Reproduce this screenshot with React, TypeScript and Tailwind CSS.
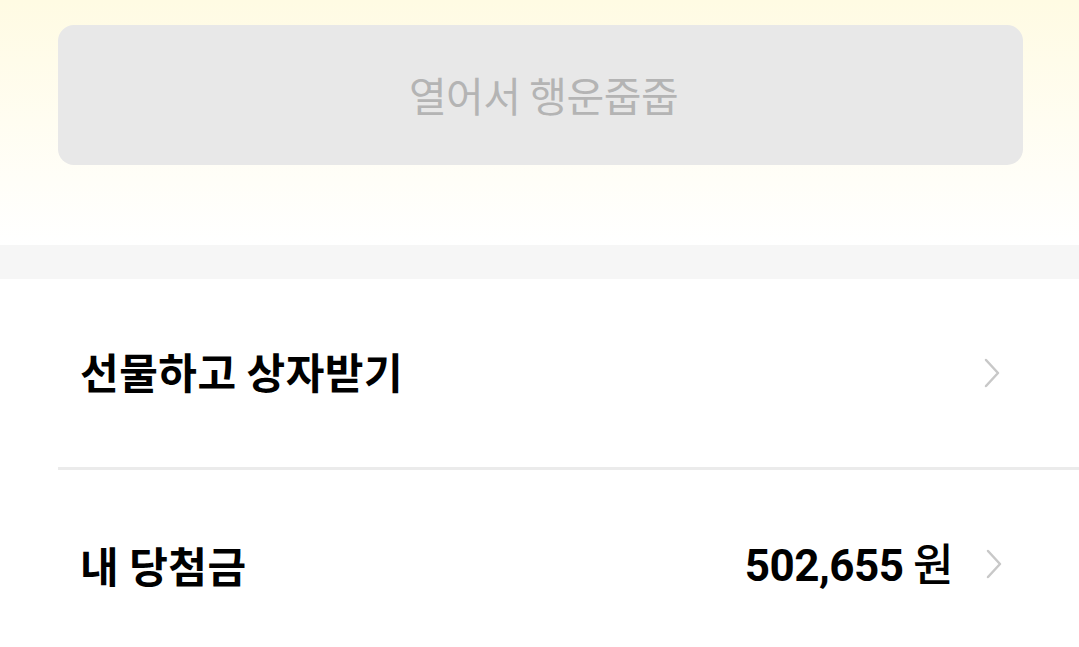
export default function App() {
  const kr = { fontFamily: '"Noto Sans CJK KR", "Noto Sans", sans-serif' };

  function Chevron() {
    return (
      <svg width="18" height="32" viewBox="0 0 18 32" fill="none" className="shrink-0">
        <path d="M3 3 L15 16 L3 29" stroke="#c8c8c8" strokeWidth="2.5" strokeLinecap="round" strokeLinejoin="round" />
      </svg>
    );
  }

  return (
    <div className="w-[1079px] h-[647px] overflow-hidden bg-white" style={kr}>
      {/* 상단 버튼 영역 */}
      <section className="bg-gradient-to-b from-[#fffbe3] to-white pt-[25px] pb-[80px] pl-[58px] pr-[56px] w-[1079px] box-border">
        <button
          type="button"
          className="w-full h-[140px] rounded-[16px] bg-[#e8e8e8] flex items-center justify-center pl-[6px] text-[41px] text-[#b4b4b4] tracking-[-0.5px]"
        >
          열어서 행운줍줍
        </button>
      </section>

      <div className="h-[34px] bg-[#f6f6f6]" />

      {/* 리스트 */}
      <ul className="pl-[58px]">
        <li className="h-[191px] flex items-center justify-between pl-[22px] pr-[78px] border-b-[3px] border-[#ebebeb]">
          <span className="text-[42px] font-bold text-black tracking-[0.5px] -mt-[6px]">선물하고 상자받기</span>
          <Chevron />
        </li>
        <li className="h-[188px] flex items-center justify-between pl-[22px] pr-[76px]">
          <span className="text-[42px] font-bold text-black tracking-[0.5px]">내 당첨금</span>
          <div className="flex items-center gap-[32px]">
            <span className="text-[44px] text-black tracking-[-0.5px]">
              <span className="font-bold" style={{ fontFamily: 'Roboto, "Noto Sans CJK KR", sans-serif' }}>502,655</span>
              <span className="font-medium"> 원</span>
            </span>
            <Chevron />
          </div>
        </li>
      </ul>
    </div>
  );
}
